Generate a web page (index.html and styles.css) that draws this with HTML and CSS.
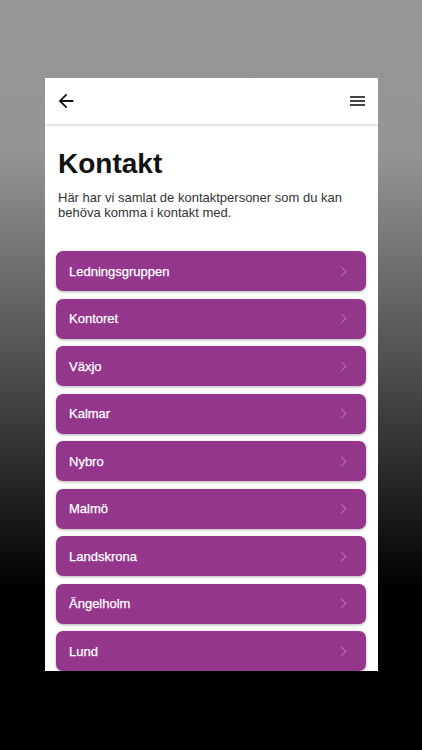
FILE: index.html
```html
<!DOCTYPE html>
<html lang="sv">
<head>
<meta charset="utf-8">
<title>Kontakt</title>
<link rel="stylesheet" href="styles.css">
</head>
<body>
<div class="screen">
  <header class="topbar">
    <button class="icon-btn" aria-label="Tillbaka">
      <svg width="22" height="22" viewBox="0 0 24 24"><path d="M20 11H7.83l5.59-5.59L12 4l-8 8 8 8 1.41-1.41L7.83 13H20v-2z" fill="#111"/></svg>
    </button>
    <button class="icon-btn menu" aria-label="Meny">
      <span></span><span></span><span></span>
    </button>
  </header>
  <main class="content">
    <h1 class="title">Kontakt</h1>
    <p class="intro">Här har vi samlat de kontaktpersoner som du kan behöva komma i kontakt med.</p>
    <nav class="list">
      <a class="item" href="#"><span>Ledningsgruppen</span><i class="chev"></i></a>
      <a class="item" href="#"><span>Kontoret</span><i class="chev"></i></a>
      <a class="item" href="#"><span>Växjo</span><i class="chev"></i></a>
      <a class="item" href="#"><span>Kalmar</span><i class="chev"></i></a>
      <a class="item" href="#"><span>Nybro</span><i class="chev"></i></a>
      <a class="item" href="#"><span>Malmö</span><i class="chev"></i></a>
      <a class="item" href="#"><span>Landskrona</span><i class="chev"></i></a>
      <a class="item" href="#"><span>Ängelholm</span><i class="chev"></i></a>
      <a class="item" href="#"><span>Lund</span><i class="chev"></i></a>
    </nav>
  </main>
</div>
</body>
</html>
```
FILE: styles.css
```css
html, body {
  margin: 0;
  padding: 0;
  height: 100%;
}
body {
  width: 422px;
  height: 750px;
  overflow: hidden;
  background: linear-gradient(to bottom, #969696 0px, #959595 150px, #4a4a4a 380px, #000 590px, #000 750px);
  font-family: "Liberation Sans", Arial, sans-serif;
  padding-top: 78px;
  box-sizing: border-box;
}
.screen {
  margin-left: 45px;
  width: 333px;
  height: 593px;
  background: #fff;
  overflow: hidden;
  display: flex;
  flex-direction: column;
}
.topbar {
  height: 46px;
  flex: 0 0 46px;
  display: flex;
  align-items: center;
  justify-content: space-between;
  padding: 0 12px 0 10px;
  box-shadow: 0 1px 3px rgba(0,0,0,0.22);
  position: relative;
  z-index: 1;
}
.icon-btn {
  border: 0;
  background: none;
  padding: 0;
  width: 22px;
  height: 22px;
  display: flex;
  align-items: center;
  justify-content: center;
  cursor: pointer;
}
.menu {
  flex-direction: column;
  gap: 2px;
  width: 18px;
}
.menu span {
  display: block;
  width: 15px;
  height: 2px;
  background: #444;
}
.content {
  padding: 0 12px 0 11px;
}
.title {
  margin: 24px 0 0 2px;
  font-size: 28px;
  line-height: 32px;
  font-weight: bold;
  color: #111;
}
.intro {
  margin: 10px 0 0 2px;
  font-size: 13px;
  line-height: 15px;
  color: #333;
}
.list {
  margin-top: 31px;
  display: flex;
  flex-direction: column;
  gap: 7.5px;
}
.item {
  height: 40px;
  border-radius: 7px;
  background: #94368b;
  box-shadow: 0 1px 3px rgba(0,0,0,0.3);
  display: flex;
  align-items: center;
  justify-content: space-between;
  padding: 0 21px 0 13px;
  color: #fff;
  text-decoration: none;
  font-size: 13px;
  -webkit-text-stroke: 0.25px #fff;
}
.chev {
  width: 6px;
  height: 6px;
  border-top: 1.3px solid #b572ad;
  border-right: 1.3px solid #b572ad;
  transform: rotate(45deg);
}
```
